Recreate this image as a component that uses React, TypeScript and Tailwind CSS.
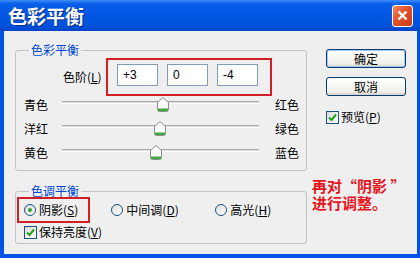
const cjk = "font-['Noto_Sans_CJK_SC','Noto_Sans',sans-serif]";

const sliders = [
  { left: "青色", right: "红色", value: 3 },
  { left: "洋红", right: "绿色", value: 0 },
  { left: "黄色", right: "蓝色", value: -4 },
];

const Key = ({ label, k }: { label: string; k: string }) => (
  <span>
    {label}(<u className="underline">{k}</u>)
  </span>
);

const Thumb = () => (
  <svg width="12" height="15" viewBox="0 0 12 15">
    <path d="M0.5 5.5 L6 0.5 L11.5 5.5 V12.5 Q11.5 14.5 9.5 14.5 H2.5 Q0.5 14.5 0.5 12.5 Z" fill="#fbfbfb" stroke="#8c8c8c" />
    <rect x="1" y="11.5" width="10" height="2.5" fill="#3ea83e" />
  </svg>
);

const Check = () => (
  <span className="w-[13px] h-[13px] border border-[#1c5180] bg-[linear-gradient(135deg,#dcdcd6,#ffffff)] flex items-center justify-center">
    <svg width="11" height="11" viewBox="0 0 11 11">
      <path d="M2 5.5 L4.5 8 L9 2.5" fill="none" stroke="#21a121" strokeWidth="2" />
    </svg>
  </span>
);

const Radio = ({ on }: { on?: boolean }) => (
  <span className="w-[12px] h-[12px] rounded-full border border-[#1c5180] bg-[linear-gradient(135deg,#dcdcd6,#ffffff)] flex items-center justify-center">
    {on && <span className="w-[4px] h-[4px] rounded-full bg-[#2fa52f]" />}
  </span>
);

const Field = ({ v }: { v: string }) => (
  <div className="w-[41px] h-[22px] border border-[#7f9db9] bg-white pl-[5px] flex items-center text-[12px] font-['Liberation_Sans',sans-serif]">
    {v}
  </div>
);

export default function App() {
  return (
    <div className={`w-[420px] h-[258px] bg-[#0054e3] flex flex-col ${cjk} text-[12px] leading-[14px] text-black`}>
      <div className="h-[31px] shrink-0 flex items-center justify-between pl-[8px] pr-[7px] bg-[linear-gradient(to_bottom,#3d8ef8_0%,#0a5fe8_12%,#0056e4_50%,#0051da_85%,#0044c6_100%)]">
        <span className="text-white font-bold text-[19px] leading-[22px] [text-shadow:1px_1px_#0b2a86]">色彩平衡</span>
        <span className="w-[21px] h-[22px] rounded-[3px] border border-white bg-[linear-gradient(135deg,#f08a64,#e0522a_45%,#c93c18)] flex items-center justify-center">
          <svg width="11" height="11" viewBox="0 0 11 11">
            <path d="M1.5 1.5 L9.5 9.5 M9.5 1.5 L1.5 9.5" stroke="white" strokeWidth="2.4" />
          </svg>
        </span>
      </div>

      <div className="flex-1 ml-[4px] mr-[3px] mb-[4px] bg-[#efefef] flex">
        <div className="pl-[11px] pt-[12px]">
          <fieldset className="w-[292px] border border-[#c3c3c3] rounded-[3px] pb-[8px]">
            <legend className="ml-[13px] px-[2px] text-[#0046d5] leading-[14px]">色彩平衡</legend>
            <div className="flex items-center ml-[47px] mt-[1px]">
              <span className="w-[40px]"><Key label="色阶" k="L" /></span>
              <div className="ml-[3px] border-2 border-[#d21f26] pt-[4px] pl-[9px] pr-[12px] pb-[8px] flex gap-[9px]">
                <Field v="+3" />
                <Field v="0" />
                <Field v="-4" />
              </div>
            </div>
            <div className="flex flex-col gap-[6px]">
              {sliders.map((s) => (
                <div key={s.left} className="h-[18px] flex items-center ml-[8px]">
                  <span className="w-[38px]">{s.left}</span>
                  <div className="relative w-[197px] h-[18px]">
                    <div className="mt-[5px] h-[3px] border-t border-[#a8a8a8] border-b border-b-white bg-[#dedede]" />
                    <div className="absolute top-[1px]" style={{ left: 98 + s.value - 6 }}>
                      <Thumb />
                    </div>
                  </div>
                  <span className="ml-[16px]">{s.right}</span>
                </div>
              ))}
            </div>
          </fieldset>

          <fieldset className="w-[292px] mt-[13px] border border-[#c3c3c3] rounded-[3px] pb-[3px]">
            <legend className="ml-[13px] px-[2px] text-[#0046d5] leading-[14px]">色调平衡</legend>
            <div className="flex items-center mt-[-1px]">
              <span className="ml-[1px] border-2 border-[#d21f26] py-[3px] pl-[5px] pr-[10px] h-[26px] flex items-center gap-[3px]">
                <Radio on />
                <Key label="阴影" k="S" />
              </span>
              <span className="ml-[21px] w-[104px] flex items-center gap-[3px]">
                <Radio />
                <Key label="中间调" k="D" />
              </span>
              <span className="flex items-center gap-[3px]">
                <Radio />
                <Key label="高光" k="H" />
              </span>
            </div>
            <div className="h-[16px] mt-[1px] ml-[8px] flex items-center gap-[2px]">
              <Check />
              <Key label="保持亮度" k="V" />
            </div>
          </fieldset>
        </div>

        <div className="ml-[5px] flex-1 flex flex-col">
          <button className="ml-[14px] mt-[18px] w-[80px] h-[19px] rounded-[3px] border border-[#003c74] bg-[linear-gradient(to_bottom,#ffffff,#f0f0ea_80%,#d6d0c5)] shadow-[inset_0_0_0_1px_#a9c7f5] leading-[14px]">
            确定
          </button>
          <button className="ml-[14px] mt-[9px] w-[80px] h-[19px] rounded-[3px] border border-[#003c74] bg-[linear-gradient(to_bottom,#ffffff,#f0f0ea_80%,#d6d0c5)] leading-[14px]">
            取消
          </button>
          <div className="ml-[14px] mt-[14px] h-[14px] flex items-center gap-[2px]">
            <Check />
            <Key label="预览" k="P" />
          </div>
          <div className="mt-[53px] text-[#e8141c] font-bold text-[15px] leading-[17px]">
            <div>再对“阴影 ”</div>
            <div>进行调整。</div>
          </div>
        </div>
      </div>
    </div>
  );
}
